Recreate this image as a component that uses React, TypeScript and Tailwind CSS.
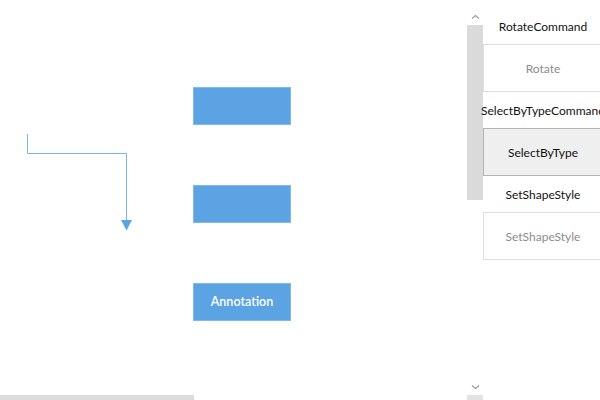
import React from 'react';

const nodes = [
  { top: 87, label: '' },
  { top: 185, label: '' },
  { top: 283, label: 'Annotation' },
];

const commands = [
  { title: 'RotateCommand', button: 'Rotate', active: false },
  { title: 'SelectByTypeCommand', button: 'SelectByType', active: true },
  { title: 'SetShapeStyle', button: 'SetShapeStyle', active: false },
];

const Chevron: React.FC<{ down?: boolean }> = ({ down }) => (
  <svg width="9" height="6" viewBox="0 0 9 6" className="text-[#9a9a9a]">
    <path d={down ? 'M1 1.5 L4.5 4.5 L8 1.5' : 'M1 4.5 L4.5 1.5 L8 4.5'} fill="none" stroke="currentColor" strokeWidth="1.1" />
  </svg>
);

const App: React.FC = () => {
  return (
    <div className="flex w-[600px] h-[400px] bg-white overflow-hidden" style={{ fontFamily: 'Lato, "Noto Sans", sans-serif' }}>
      {/* diagram canvas */}
      <div className="flex flex-col w-[467px] h-full shrink-0">
        <div className="relative flex-1">
          <svg className="absolute inset-0" width="467" height="395">
            <path d="M27.5 134 V153.5 H126.5 V221" fill="none" stroke="#79b6ee" strokeWidth="1" />
            <path d="M121 220 L132 220 L126.5 230.5 Z" fill="#5ba3e2" />
          </svg>
          {nodes.map((n, i) => (
            <div
              key={i}
              className="absolute left-[193px] w-[98px] h-[38px] bg-[#5ba3e2] border border-[#7fb8ea] flex items-center justify-center pt-[1px] text-white text-[12.5px] font-semibold"
              style={{ top: n.top }}
            >
              {n.label}
            </div>
          ))}
        </div>
        <div className="h-[5px] w-[194px] bg-[#dcdcdc]" />
      </div>

      {/* command panel */}
      <div className="flex flex-1 h-full">
        <div className="flex flex-col items-center w-[16px] shrink-0">
          <div className="h-[25px] w-full flex items-center justify-center pt-[8px]">
            <Chevron />
          </div>
          <div className="h-[175px] w-full bg-[#dadada]" />
          <div className="flex-1" />
          <div className="h-[10px] w-full flex items-center justify-center">
            <Chevron down />
          </div>
          <div className="h-[3px]" />
          <div className="h-[5px] w-full bg-[#e3e3e3]" />
        </div>
        <div className="flex flex-col w-[120px] shrink-0 pt-[8px]">
          {commands.map(c => (
            <div key={c.title} className="flex flex-col">
              <div className="h-[36px] flex items-center justify-center pt-[2px] whitespace-nowrap text-[12px] text-[#111]">
                {c.title}
              </div>
              <div
                className={
                  c.active
                    ? 'h-[48px] flex items-center justify-center pt-[2px] border border-[#b3b3b3] bg-[#efefef] text-[12px] text-[#111]'
                    : 'h-[48px] flex items-center justify-center pt-[2px] border border-[#dedede] bg-white text-[12px] text-[#8c8c8c]'
                }
              >
                {c.button}
              </div>
            </div>
          ))}
        </div>
      </div>
    </div>
  );
};

export default App;
